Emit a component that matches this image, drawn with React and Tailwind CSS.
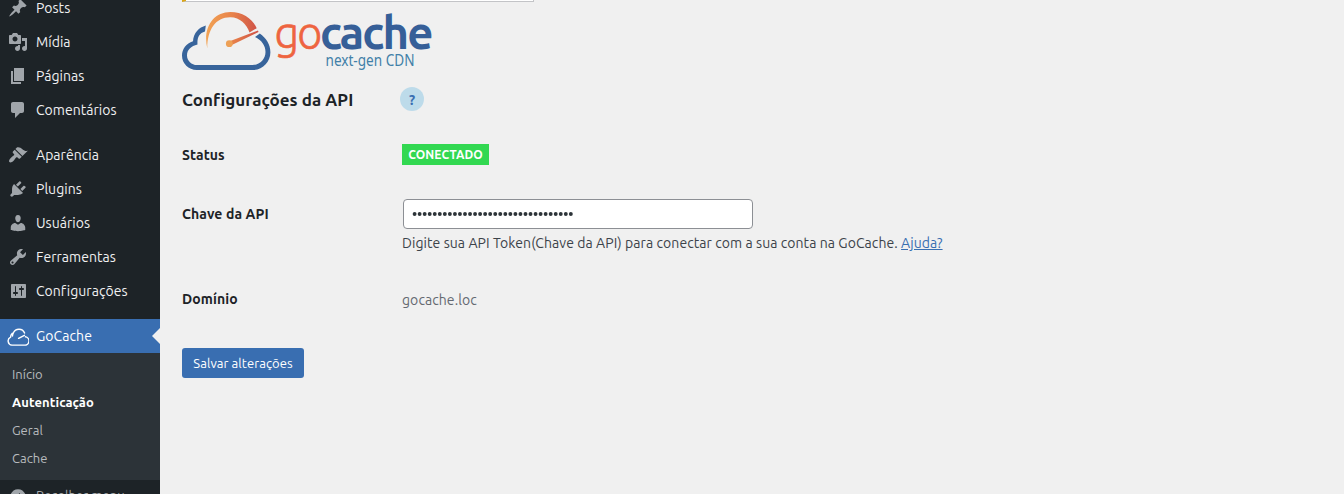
const ICONS = {
  post: 'M10.44 3.02l1.82-1.82 6.36 6.35-1.83 1.82c-1.05-.68-2.48-.57-3.41.36l-.75.75c-.92.93-1.04 2.35-.35 3.41l-1.83 1.82-2.41-2.41-2.8 2.79c-.42.42-3.38 2.71-3.8 2.29s1.86-3.39 2.28-3.81l2.79-2.79L4.1 9.36l1.83-1.82c1.05.69 2.48.57 3.4-.36l.75-.75c.93-.92 1.05-2.35.36-3.41z',
  media: 'M13 11V4c0-.55-.45-1-1-1h-1.67L9 1H5L3.67 3H2c-.55 0-1 .45-1 1v7c0 .55.45 1 1 1h10c.55 0 1-.45 1-1zM7 4.5c1.38 0 2.5 1.12 2.5 2.5S8.38 9.5 7 9.5 4.5 8.38 4.5 7 5.62 4.5 7 4.5zM14 6h5v10.5c0 1.38-1.12 2.5-2.5 2.5S14 17.88 14 16.5s1.12-2.5 2.5-2.5c.17 0 .34.02.5.05V9h-3V6zm-4 8.05V13h2v3.5c0 1.38-1.12 2.5-2.5 2.5S7 17.88 7 16.5 8.12 14 9.5 14c.17 0 .34.02.5.05z',
  page: 'M6 15V2h10v13H6zm-1 1h8v2H3V5h2v11z',
  comments: 'M5 2h9c1.1 0 2 .9 2 2v7c0 1.1-.9 2-2 2h-2l-5 5v-5H5c-1.1 0-2-.9-2-2V4c0-1.1.9-2 2-2z',
  appearance: 'M14.48 11.06L7.41 3.99l1.5-1.5c.5-.56 2.3-.47 3.51.32 1.21.8 1.43 1.28 2.91 2.1 1.18.64 2.45 1.26 4.45.85zm-.71.71L6.7 4.7 4.93 6.47c-.39.39-.39 1.02 0 1.41l1.06 1.06c.39.39.39 1.03 0 1.42-.6.6-1.43 1.11-2.21 1.69-.35.26-.7.53-1.01.84C1.43 14.23.4 16.08 1.4 17.07c.99 1 2.84-.03 4.18-1.36.31-.31.58-.66.85-1.02.57-.78 1.08-1.61 1.69-2.21.39-.39 1.02-.39 1.41 0l1.06 1.06c.39.39 1.02.39 1.41 0z',
  plugins: 'M13.11 4.36L9.87 7.6 8 5.73l3.24-3.24c.35-.34 1.05-.2 1.56.32.52.51.66 1.21.31 1.55zm-8 1.77l.91-1.12 9.01 9.01-1.19.84c-.71.71-2.63 1.16-3.82 1.16H6.14L4.9 17.26c-.59.59-1.54.59-2.12 0-.59-.58-.59-1.53 0-2.12l1.24-1.24v-3.88c0-1.13.4-3.19 1.09-3.89zm7.26 3.97l3.24-3.24c.34-.35 1.04-.21 1.55.31.52.51.66 1.21.31 1.55l-3.24 3.25z',
  users: 'M10 9.25c-2.27 0-2.73-3.44-2.73-3.44C7 4.02 7.82 2 9.97 2c2.16 0 2.98 2.02 2.71 3.81 0 0-.41 3.44-2.68 3.44zm0 2.57L12.72 10c2.39 0 4.52 2.33 4.52 4.53v2.49s-3.65 1.13-7.24 1.13c-3.65 0-7.24-1.13-7.24-1.13v-2.49c0-2.25 1.94-4.48 4.47-4.48z',
  tools: 'M16.68 9.77c-1.34 1.34-3.3 1.67-4.95.99l-5.41 6.52c-.99.99-2.59.99-3.58 0s-.99-2.59 0-3.57l6.52-5.42c-.68-1.65-.35-3.61.99-4.95 1.28-1.28 3.12-1.62 4.72-1.06l-2.89 2.89 2.82 2.82 2.86-2.87c.53 1.58.18 3.39-1.08 4.65zM3.81 16.21c.4.39 1.04.39 1.43 0 .4-.4.4-1.04 0-1.43-.39-.4-1.03-.4-1.43 0-.39.39-.39 1.03 0 1.43z',
  settings: 'M18 16V4c0-.55-.45-1-1-1H4c-.55 0-1 .45-1 1v12c0 .55.45 1 1 1h13c.55 0 1-.45 1-1zM8 11h1c.55 0 1 .45 1 1s-.45 1-1 1H8v1.5c0 .28-.22.5-.5.5s-.5-.22-.5-.5V13H6c-.55 0-1-.45-1-1s.45-1 1-1h1V5.5c0-.28.22-.5.5-.5s.5.22.5.5V11zm5-2h-1c-.55 0-1-.45-1-1s.45-1 1-1h1V5.5c0-.28.22-.5.5-.5s.5.22.5.5V7h1c.55 0 1 .45 1 1s-.45 1-1 1h-1v5.5c0 .28-.22.5-.5.5s-.5-.22-.5-.5V9z',
  collapse: 'M10 2.16c4.33 0 7.84 3.51 7.84 7.84s-3.51 7.84-7.84 7.84S2.16 14.33 2.16 10 5.71 2.16 10 2.16zm2 11.72V6.12L6.18 9.97z',
};

function MenuIcon({ name }) {
  return (
    <svg viewBox="0 0 20 20" className="size-5 shrink-0 fill-[#a0a5aa]">
      <path d={ICONS[name]} />
    </svg>
  );
}

function MenuItem({ icon, label }) {
  return (
    <li className="flex h-[34px] items-center pl-2 text-sm text-[#f0f0f1]">
      <MenuIcon name={icon} />
      <span className="ml-2 tracking-[0.04px] whitespace-nowrap">{label}</span>
    </li>
  );
}

function Sidebar() {
  return (
    <nav className="h-full w-40 shrink-0 overflow-hidden bg-[#1d2327]">
      <ul className="-mt-[9px]">
        <MenuItem icon="post" label="Posts" />
        <MenuItem icon="media" label="Mídia" />
        <MenuItem icon="page" label="Páginas" />
        <MenuItem icon="comments" label="Comentários" />
      </ul>
      <ul className="mt-[11px]">
        <MenuItem icon="appearance" label="Aparência" />
        <MenuItem icon="plugins" label="Plugins" />
        <MenuItem icon="users" label="Usuários" />
        <MenuItem icon="tools" label="Ferramentas" />
        <MenuItem icon="settings" label="Configurações" />
      </ul>
      <div className="mt-[11px] flex h-[34px] items-center bg-[#396eb1] pl-[7px] text-sm text-white">
        <svg viewBox="0 0 22 18" className="mt-0.5 h-[18px] w-[22px] shrink-0 fill-none stroke-white" strokeLinecap="round">
          <path d="M4.9 17.1h12.2A4.2 4.2 0 0 0 18.4 8.8M17.6 5A6.1 6.1 0 0 0 6.4 4.8Q5.6 6 5.5 8M5.3 5.2A5.2 5.2 0 0 0 3.6 9.1 4.2 4.2 0 0 0 4.9 17.1" strokeWidth="1.4" />
          <path d="M11.6 10.3l5.8-3" strokeWidth="1.5" />
        </svg>
        <span className="ml-[7px] grow tracking-[0.06px]">GoCache</span>
        <svg viewBox="0 0 8 16" className="h-4 w-2 fill-[#f0f0f0]">
          <path d="M8 0v16L0 8z" />
        </svg>
      </div>
      <ul className="h-[127px] bg-[#2c3338] pt-[7px] pl-3 text-[13px] leading-7 text-[#b8bbbe]">
        <li>Início</li>
        <li className="font-bold tracking-[0.1px] text-white">Autenticação</li>
        <li>Geral</li>
        <li>Cache</li>
      </ul>
      <div className="flex h-[34px] items-center pl-2 text-[13px] text-[#a7aaad]">
        <MenuIcon name="collapse" />
        <span className="-mt-0.5 ml-2 tracking-[0.06px] whitespace-nowrap">Recolher menu</span>
      </div>
    </nav>
  );
}

function Logo() {
  return (
    <svg viewBox="0 0 252 64" className="mt-2 block h-16 w-[252px] overflow-visible">
      <defs>
        <linearGradient id="dial" x1="24" x2="76" y1="0" y2="0" gradientUnits="userSpaceOnUse">
          <stop offset="0" stopColor="#f2a354" />
          <stop offset=".5" stopColor="#e8834a" />
          <stop offset="1" stopColor="#cf5147" />
        </linearGradient>
      </defs>
      <g transform="translate(0 -2)">
        <path d="M23.8 17.6C17 19.5 11.5 25 11 33.2C4.2 35.5 0 41 0 47.5C0 55.5 6.5 62 14.8 62H70.5C80.5 62 88.4 54 88.4 44.2C88.4 36.5 84 30 77.8 25.6L73 29C79.5 32 83.5 37.5 83.5 44C83.5 51.2 77.8 57 70.5 57H15C9.5 57 5 52.7 5 47.4C5 42.2 9 38 15.5 36.6C15 30 17 25.2 23 23.5Z" fill="#38649b" />
        <path d="M25.3 40.5C20.5 20 31 4 48.5 4C60.5 4 70.5 10.5 74.7 20.2L67.5 24.5C64.5 16 58 9.5 48.5 9.3C34 9 25.2 21.5 25.3 40.5Z" fill="url(#dial)" />
        <path d="M47 33.5L76 22.5L76.5 24L48.8 37.5Z" fill="url(#dial)" />
        <circle cx="47.3" cy="35.7" r="3.4" fill="#eda056" />
      </g>
      <text x="92.6" y="39" textLength="46" lengthAdjust="spacingAndGlyphs" strokeWidth="0.7" className="fill-[#ee6440] stroke-[#ee6440] font-[Ubuntu,'Noto_Sans',sans-serif] text-[48px] font-light tracking-[-2px]">go</text>
      <text x="138" y="39" textLength="111.5" lengthAdjust="spacingAndGlyphs" className="fill-[#365f98] font-[Ubuntu,'Noto_Sans',sans-serif] text-[46px] font-bold tracking-[-2px]">cache</text>
      <text x="143.500" y="55.500" textLength="89" lengthAdjust="spacingAndGlyphs" className="fill-[#4280a8] font-['Noto_Sans',sans-serif] text-[16px]">next-gen CDN</text>
    </svg>
  );
}

export default function App() {
  return (
    <div className="flex h-[494px] w-full overflow-hidden bg-[#f0f0f0] font-[Ubuntu,'Noto_Sans',sans-serif] text-[#1d2327]">
      <Sidebar />
      <main className="flex grow flex-col items-start pl-[22px]">
        <div className="h-0.5 w-[352px] border-r border-b border-l-4 border-[#c3c4c7] border-l-[#dba617] bg-white" />
        <Logo />
        <div className="mt-[13px] flex h-6 items-center">
          <h1 className="mt-0.5 w-[218px] text-[17px] font-bold tracking-[0.05px]">Configurações da API</h1>
          <span className="flex size-6 items-center justify-center rounded-full bg-[#bddbea] pt-0.5 text-sm font-bold text-[#396eb1]">?</span>
        </div>
        <div className="mt-[33px] flex h-[21px] items-center">
          <span className="w-[220px] text-sm font-bold tracking-[0.1px]">Status</span>
          <span className="flex h-[21px] w-[87px] items-center justify-center bg-[#32d851] text-xs font-bold tracking-[0.1px] text-white">CONECTADO</span>
        </div>
        <div className="mt-[34px] flex">
          <label htmlFor="token" className="w-[221px] text-sm leading-[30px] font-bold tracking-[0.1px]">Chave da API</label>
          <div id="token" className="flex h-[30px] w-[350px] items-center rounded border border-[#8c8f94] bg-white pl-2">
            <svg viewBox="0 0 162 6" className="h-1.5 w-[162px] fill-[#2c3338]">
              {Array.from({ length: 32 }, (_, i) => (
                <circle key={i} cx={2.6 + i * 5.04} cy="3" r="1.95" />
              ))}
            </svg>
          </div>
        </div>
        <p className="mt-1 ml-[220px] text-sm tracking-[0.07px] whitespace-nowrap text-[#3c434a]">
          Digite sua API Token(Chave da API) para conectar com a sua conta na GoCache.{' '}
          <a className="text-[#396eb1] underline">Ajuda?</a>
        </p>
        <div className="mt-9 flex h-5 items-center text-sm">
          <span className="w-[220px] font-bold tracking-[0.1px]">Domínio</span>
          <span className="mt-0.5 tracking-[0.07px] text-[#646970]">gocache.loc</span>
        </div>
        <button className="mt-[39px] h-[30px] w-[122px] rounded-[3px] bg-[#396eb1] pt-0.5 text-[13px] tracking-[0.07px] whitespace-nowrap text-white">Salvar alterações</button>
      </main>
    </div>
  );
}
